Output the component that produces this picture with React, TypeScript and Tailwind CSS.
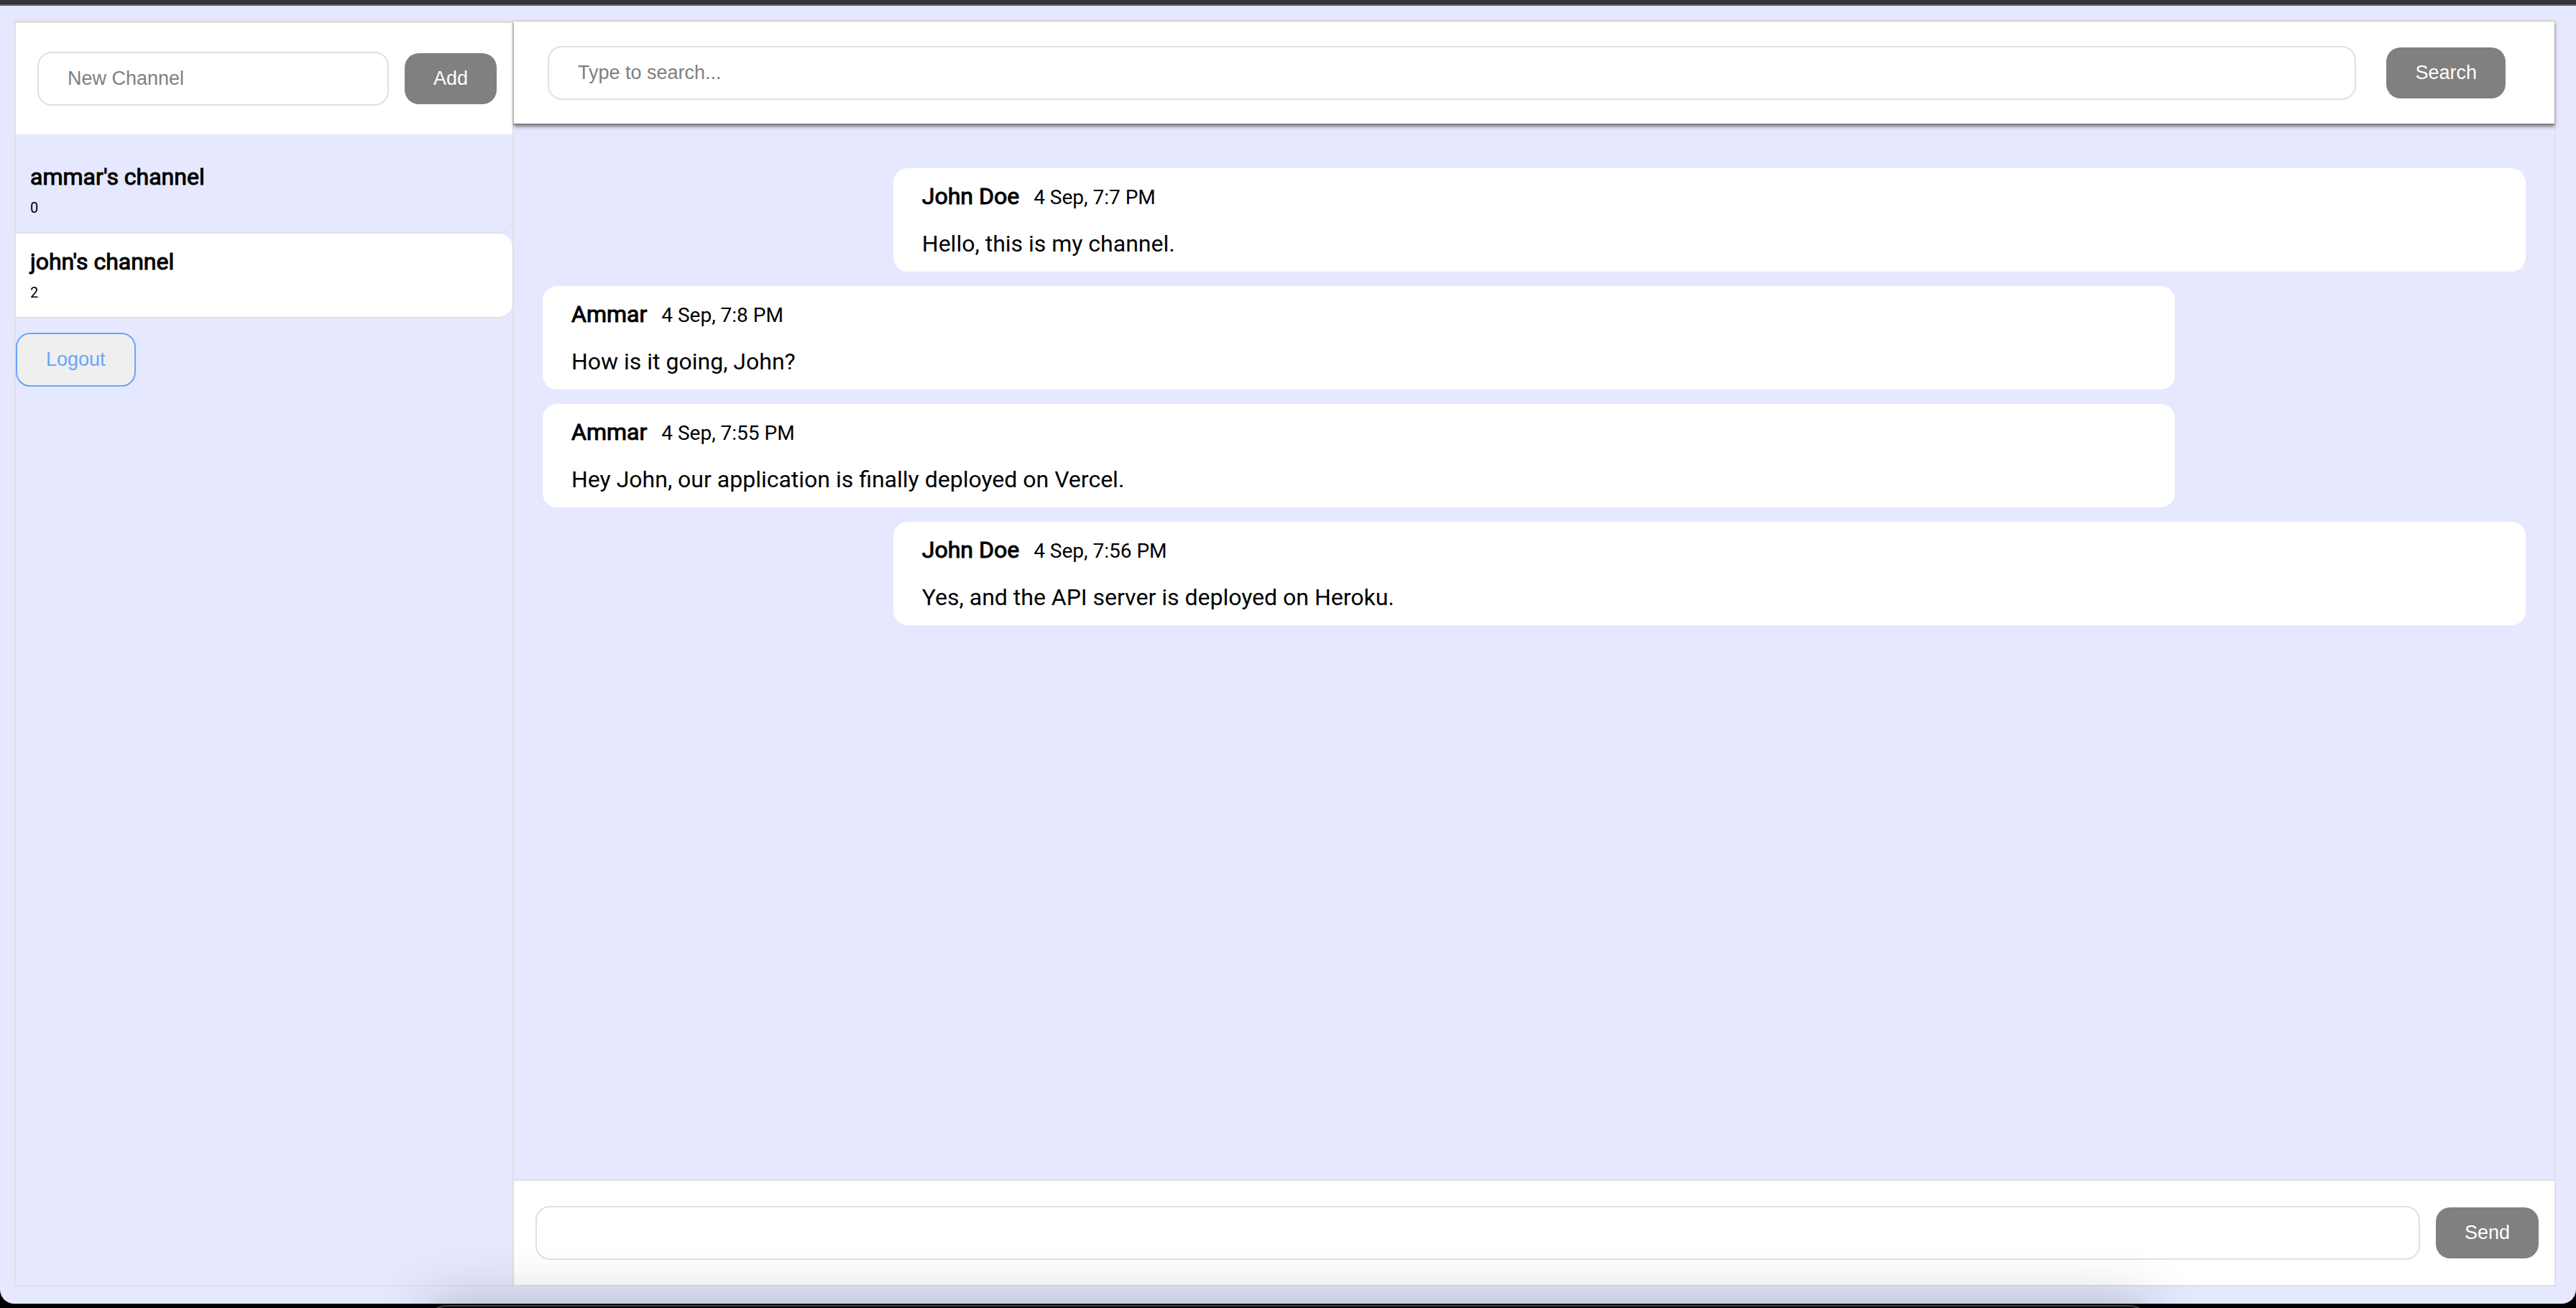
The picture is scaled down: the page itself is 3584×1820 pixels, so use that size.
type Message = {
  author: string;
  time: string;
  text: string;
  mine: boolean;
};

type Channel = {
  name: string;
  unread: number;
  active: boolean;
};

const channels: Channel[] = [
  { name: "ammar's channel", unread: 0, active: false },
  { name: "john's channel", unread: 2, active: true },
];

const messages: Message[] = [
  {
    author: "John Doe",
    time: "4 Sep, 7:7 PM",
    text: "Hello, this is my channel.",
    mine: true,
  },
  {
    author: "Ammar",
    time: "4 Sep, 7:8 PM",
    text: "How is it going, John?",
    mine: false,
  },
  {
    author: "Ammar",
    time: "4 Sep, 7:55 PM",
    text: "Hey John, our application is finally deployed on Vercel.",
    mine: false,
  },
  {
    author: "John Doe",
    time: "4 Sep, 7:56 PM",
    text: "Yes, and the API server is deployed on Heroku.",
    mine: true,
  },
];

const inputStyle =
  "min-w-0 flex-1 rounded-[20px] border-2 border-[#e0e0e0] bg-white px-10 py-5 font-['Liberation_Sans',Arial,sans-serif] text-[27px] leading-[31px] text-black placeholder:text-[#808080] outline-none";

const buttonStyle =
  "rounded-[20px] bg-[#808080] px-10 py-5 font-['Liberation_Sans',Arial,sans-serif] text-[27px] leading-[31px] text-white";

const Sidebar = () => {
  return (
    <aside className="flex w-[693px] shrink-0 flex-col border-r-2 border-[#e0e0e0]">
      <form className="flex h-[157px] items-center gap-[22px] border-t-2 border-[#e0e0e0] bg-white pr-[22px] pl-[30px]">
        <input
          type="text"
          aria-label="New Channel"
          placeholder="New Channel"
          className={inputStyle}
        />
        <button type="button" className={buttonStyle}>
          Add
        </button>
      </form>
      <ul className="pt-5">
        {channels.map((channel) => (
          <li
            key={channel.name}
            className={`h-[118px] rounded-r-[20px] border-b-2 border-[#e0e0e0] px-5 pt-5 ${
              channel.active ? "bg-white" : ""
            }`}
          >
            <div className="text-[32px] leading-[38px] [-webkit-text-stroke:1px_black]">
              {channel.name}
            </div>
            <div className="mt-3 text-xl leading-6">{channel.unread}</div>
          </li>
        ))}
      </ul>
      <button
        type="button"
        className="mt-5 self-start rounded-[20px] border-2 border-[#66a6ff] bg-[#efefef] px-10 py-5 font-['Liberation_Sans',Arial,sans-serif] text-[27px] leading-[31px] text-[#66a6ff]"
      >
        Logout
      </button>
    </aside>
  );
};

const MessageCard = ({ author, time, text, mine }: Message) => {
  return (
    <li
      className={`mx-10 w-4/5 rounded-[20px] bg-white px-10 py-5 ${
        mine ? "self-end" : "self-start"
      }`}
    >
      <div className="flex items-baseline gap-5">
        <span className="text-[32px] leading-[38px] [-webkit-text-stroke:1px_black]">
          {author}
        </span>
        <span className="text-[28px] leading-8">{time}</span>
      </div>
      <p className="mt-7 text-[32px] leading-[38px]">{text}</p>
    </li>
  );
};

const Chat = () => {
  return (
    <main className="flex min-w-0 flex-1 flex-col">
      <form className="flex h-36 items-center gap-[42px] border-b-2 border-[#808080] bg-white pr-[68px] pl-[47px] shadow-[0_2px_5px_rgba(0,0,0,0.5)]">
        <input
          type="search"
          aria-label="Search messages"
          placeholder="Type to search..."
          className={inputStyle}
        />
        <button type="button" className={buttonStyle}>
          Search
        </button>
      </form>
      <ul className="flex flex-1 flex-col gap-5 pt-[60px]">
        {messages.map((message) => (
          <MessageCard key={message.time} {...message} />
        ))}
      </ul>
      <form className="flex h-[147px] items-center gap-[22px] border-t-2 border-[#e0e0e0] bg-white pr-[22px] pl-[30px]">
        <input type="text" aria-label="Message" className={inputStyle} />
        <button type="button" className={buttonStyle}>
          Send
        </button>
      </form>
    </main>
  );
};

export default function App() {
  return (
    <div className="relative flex h-screen flex-col overflow-hidden bg-black pb-[6px] font-[Roboto,sans-serif] text-black">
      <div className="h-2 shrink-0 border-b-2 border-[#5f5f62] bg-[#36353b]"></div>
      <div className="flex flex-1 rounded-b-[20px] bg-[#e6e8ff] px-5 pt-5 pb-6 pr-7">
        <div className="flex flex-1 border-2 border-[#e0e0e0]">
          <Sidebar />
          <Chat />
        </div>
      </div>
      {/* top edge of the dock, with the shadow it casts on the window */}
      <div className="pointer-events-none absolute inset-x-[590px] top-full -mt-1 h-20 rounded-[32px] border-2 border-[#444] shadow-[0_0_80px_rgba(0,0,0,0.25)]"></div>
    </div>
  );
}
